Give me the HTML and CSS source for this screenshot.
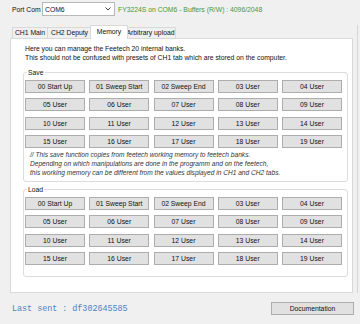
FILE: index.html
```html
<!DOCTYPE html>
<html>
<head>
<meta charset="utf-8">
<link rel="stylesheet" href="styles.css">
</head>
<body>
<div class="top">
  <span class="lbl">Port Com</span>
  <div class="combo"><span>COM6</span><svg class="arrow" width="6" height="4" viewBox="0 0 6 4"><path d="M0.5 0.5 L3 3 L5.5 0.5" fill="none" stroke="#444" stroke-width="1"/></svg></div>
  <span class="status">FY3224S on COM6 - Buffers (R/W) : 4096/2048</span>
</div>
<div class="tabarea">
  <div class="tabstrip">
    <div class="tab t1">CH1 Main</div>
    <div class="tab t2">CH2 Deputy</div>
    <div class="tab t3 active">Memory</div>
    <div class="tab t4">Arbitrary upload</div>
  </div>
  <div class="panel">
    <p class="intro">Here you can manage the Feetech 20 internal banks.<br>This should not be confused with presets of CH1 tab which are stored on the computer.</p>
    <div class="group save">
      <span class="legend">Save</span>
      <div class="grid">
        <button class="btn">00 Start Up</button><button class="btn">01 Sweep Start</button><button class="btn">02 Sweep End</button><button class="btn">03 User</button><button class="btn">04 User</button>
        <button class="btn">05 User</button><button class="btn">06 User</button><button class="btn">07 User</button><button class="btn">08 User</button><button class="btn">09 User</button>
        <button class="btn">10 User</button><button class="btn">11 User</button><button class="btn">12 User</button><button class="btn">13 User</button><button class="btn">14 User</button>
        <button class="btn">15 User</button><button class="btn">16 User</button><button class="btn">17 User</button><button class="btn">18 User</button><button class="btn">19 User</button>
      </div>
      <p class="note">// This save function copies from feetech working memory to feetech banks.<br>Depending on which manipulations are done in the programm and on the feetech,<br>this working memory can be different from the values displayed in CH1 and CH2 tabs.</p>
    </div>
    <div class="group load">
      <span class="legend">Load</span>
      <div class="grid">
        <button class="btn">00 Start Up</button><button class="btn">01 Sweep Start</button><button class="btn">02 Sweep End</button><button class="btn">03 User</button><button class="btn">04 User</button>
        <button class="btn">05 User</button><button class="btn">06 User</button><button class="btn">07 User</button><button class="btn">08 User</button><button class="btn">09 User</button>
        <button class="btn">10 User</button><button class="btn">11 User</button><button class="btn">12 User</button><button class="btn">13 User</button><button class="btn">14 User</button>
        <button class="btn">15 User</button><button class="btn">16 User</button><button class="btn">17 User</button><button class="btn">18 User</button><button class="btn">19 User</button>
      </div>
    </div>
  </div>
</div>
<div class="bottom">
  <span class="lastsent">Last sent : df302645585</span>
  <button class="btn doc">Documentation</button>
</div>
</body>
</html>
```
FILE: styles.css
```css
html, body {
  margin: 0;
  padding: 0;
}
body {
  background: #f0f0f0;
  font-family: "Liberation Sans", Arial, sans-serif;
  font-size: 6.8px;
  color: #111;
  width: 360px;
  height: 324px;
  overflow: hidden;
}
.top {
  display: flex;
  align-items: center;
  height: 14px;
  margin-top: 2px;
  padding-left: 12px;
}
.lbl {
  width: 30px;
}
.combo {
  width: 73px;
  height: 14px;
  box-sizing: border-box;
  border: 1px solid #b9b9b9;
  background: #fff;
  display: flex;
  align-items: center;
  justify-content: space-between;
  padding: 0 3px 0 2px;
}
.status {
  margin-left: 3px;
  color: #3e9a3e;
}
.tabarea {
  margin-top: 9px;
  margin-left: 10px;
  width: 343px;
  padding-right: 4px;
  border-right: 1px solid #d6d6d6;
}
.tabstrip {
  display: flex;
  align-items: flex-end;
  height: 13px;
  padding-left: 2px;
}
.tab {
  height: 11px;
  box-sizing: border-box;
  border: 1px solid #d9d9d9;
  border-bottom: none;
  background: #f0f0f0;
  line-height: 10px;
  text-align: center;
  white-space: nowrap;
}
.t1 { width: 36px; }
.t2 { width: 44px; border-left: none; }
.t3 { width: 38px; }
.t4 { width: 50px; border-left: none; }
.tab.active {
  height: 14px;
  margin: 0 -2px -1px -2px;
  background: #fff;
  position: relative;
  z-index: 1;
  line-height: 11px;
}
.panel {
  background: #fff;
  border: 1px solid #d9d9d9;
  height: 255px;
  box-sizing: border-box;
}
.intro {
  margin: 0;
  padding: 5px 0 0 14px;
  line-height: 9px;
}
.group {
  position: relative;
  border: 1px solid #dcdcdc;
  border-radius: 3px;
  margin: 10px 4px 0 12px;
  padding: 7px 5px 0 1px;
}
.group.save {
  padding-bottom: 3.5px;
}
.group.load {
  margin-top: 7px;
  padding-bottom: 11px;
}
.legend {
  position: absolute;
  top: -5px;
  left: 3px;
  background: #fff;
  padding: 0 1px;
  line-height: 9px;
}
.grid {
  display: grid;
  grid-template-columns: repeat(5, 60px);
  column-gap: 4.25px;
  row-gap: 5.33px;
}
.btn {
  height: 13px;
  box-sizing: border-box;
  border: 1px solid #adadad;
  background: #e1e1e1;
  font-family: "Liberation Sans", Arial, sans-serif;
  font-size: 6.8px;
  color: #111;
  padding: 0;
  margin: 0;
  line-height: 11px;
  white-space: nowrap;
}
.note {
  margin: 2.5px 0 0 5px;
  font-style: italic;
  font-size: 6.6px;
  line-height: 9px;
  color: #333;
}
.bottom {
  display: flex;
  justify-content: space-between;
  align-items: center;
  margin-top: 9px;
  padding: 0 6px 0 12px;
  height: 13px;
}
.lastsent {
  font-family: "Liberation Mono", "Courier New", monospace;
  font-size: 8.4px;
  color: #4f82c0;
}
.btn.doc {
  width: 83px;
}
```
